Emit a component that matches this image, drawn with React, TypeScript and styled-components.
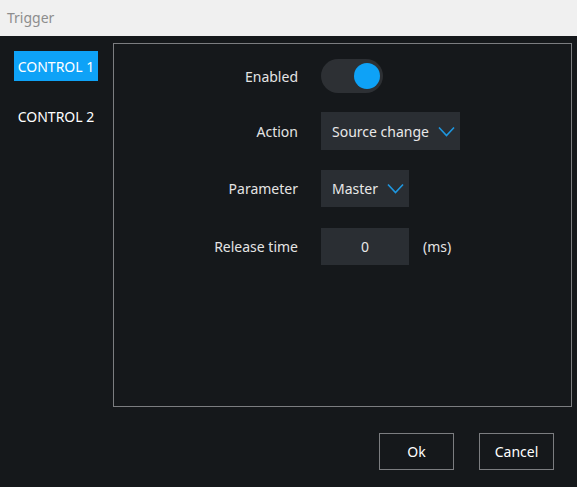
import React from "react";
import styled, { createGlobalStyle } from "styled-components";

const Global = createGlobalStyle`
  html, body { margin: 0; padding: 0; background: #15181b; }
  body { font-family: "Noto Sans", "Open Sans", sans-serif; }
  * { box-sizing: border-box; }
`;

const Window = styled.div`
  width: 577px;
  height: 487px;
  display: flex;
  flex-direction: column;
  background: #15181b;
  overflow: hidden;
`;

const TitleBar = styled.div`
  height: 36px;
  flex: none;
  background: #f0f0f0;
  color: #8d8d8d;
  font-size: 14px;
  display: flex;
  align-items: center;
  padding-left: 7px;
  padding-bottom: 2px;
`;

const Body = styled.div`
  flex: 1;
  display: flex;
  flex-direction: column;
`;

const Main = styled.div`
  display: flex;
  padding-top: 7px;
  padding-right: 5px;
`;

const Sidebar = styled.nav`
  width: 113px;
  flex: none;
  display: flex;
  flex-direction: column;
  align-items: flex-start;
  padding-top: 8px;
  padding-left: 14px;
  gap: 20px;
`;

const NavItem = styled.div<{ $active?: boolean }>`
  width: 84px;
  height: 30px;
  display: flex;
  align-items: center;
  justify-content: center;
  font-size: 14px;
  color: #ffffff;
  background: ${(p) => (p.$active ? "#0ea2f7" : "transparent")};
  white-space: nowrap;
`;

const Panel = styled.section`
  flex: 1;
  height: 364px;
  border: 1px solid #7b7d80;
  display: flex;
  flex-direction: column;
  padding-top: 15px;
  gap: 19px;
`;

const Row = styled.div<{ $mt?: number }>`
  display: grid;
  grid-template-columns: 184px auto auto;
  column-gap: 23px;
  align-items: center;
  justify-content: start;
  margin-top: ${(p) => p.$mt ?? 0}px;
`;

const Label = styled.div`
  text-align: right;
  font-size: 14px;
  color: #e4e4e4;
`;

const Toggle = styled.div`
  position: relative;
  width: 62px;
  height: 34px;
  border-radius: 17px;
  background: #2d3034;
`;

const Knob = styled.div<{ $on?: boolean }>`
  position: absolute;
  top: 4px;
  left: ${(p) => (p.$on ? "33px" : "3px")};
  width: 26px;
  height: 26px;
  border-radius: 50%;
  background: #0ea2f7;
`;

const Select = styled.div<{ $h: number }>`
  height: ${(p) => p.$h}px;
  display: flex;
  align-items: center;
  gap: 9px;
  padding: 0 5px 0 11px;
  background: #2a2e33;
  color: #e8e8e8;
  font-size: 14px;
  white-space: nowrap;
`;

const Chevron = styled.svg`
  width: 17px;
  height: 11px;
  flex: none;
`;

const NumberBox = styled.div`
  width: 88px;
  height: 37px;
  display: flex;
  align-items: center;
  justify-content: center;
  background: #2a2e33;
  color: #e8e8e8;
  font-size: 14px;
`;

const Unit = styled.div`
  font-size: 14px;
  color: #e4e4e4;
  margin-left: -9px;
`;

const Footer = styled.div`
  display: flex;
  justify-content: flex-end;
  gap: 25px;
  padding: 26px 23px 0 0;
`;

const Button = styled.button`
  width: 75px;
  height: 37px;
  background: transparent;
  border: 1px solid #7b7d80;
  color: #ffffff;
  font-family: inherit;
  font-size: 14px;
  padding: 0;
`;

const Down = () => (
  <Chevron viewBox="0 0 17 11">
    <path d="M1 1.5 L8.5 9.5 L16 1.5" fill="none" stroke="#1e97e0" strokeWidth="1.6" />
  </Chevron>
);

export default function App() {
  return (
    <Window>
      <Global />
      <TitleBar>Trigger</TitleBar>
      <Body>
        <Main>
          <Sidebar>
            <NavItem $active>CONTROL 1</NavItem>
            <NavItem>CONTROL 2</NavItem>
          </Sidebar>
          <Panel>
            <Row>
              <Label>Enabled</Label>
              <Toggle>
                <Knob $on />
              </Toggle>
            </Row>
            <Row>
              <Label>Action</Label>
              <Select $h={38}>
                Source change
                <Down />
              </Select>
            </Row>
            <Row $mt={1}>
              <Label>Parameter</Label>
              <Select $h={37}>
                Master
                <Down />
              </Select>
            </Row>
            <Row $mt={2}>
              <Label>Release time</Label>
              <NumberBox>0</NumberBox>
              <Unit>(ms)</Unit>
            </Row>
          </Panel>
        </Main>
        <Footer>
          <Button>Ok</Button>
          <Button>Cancel</Button>
        </Footer>
      </Body>
    </Window>
  );
}
